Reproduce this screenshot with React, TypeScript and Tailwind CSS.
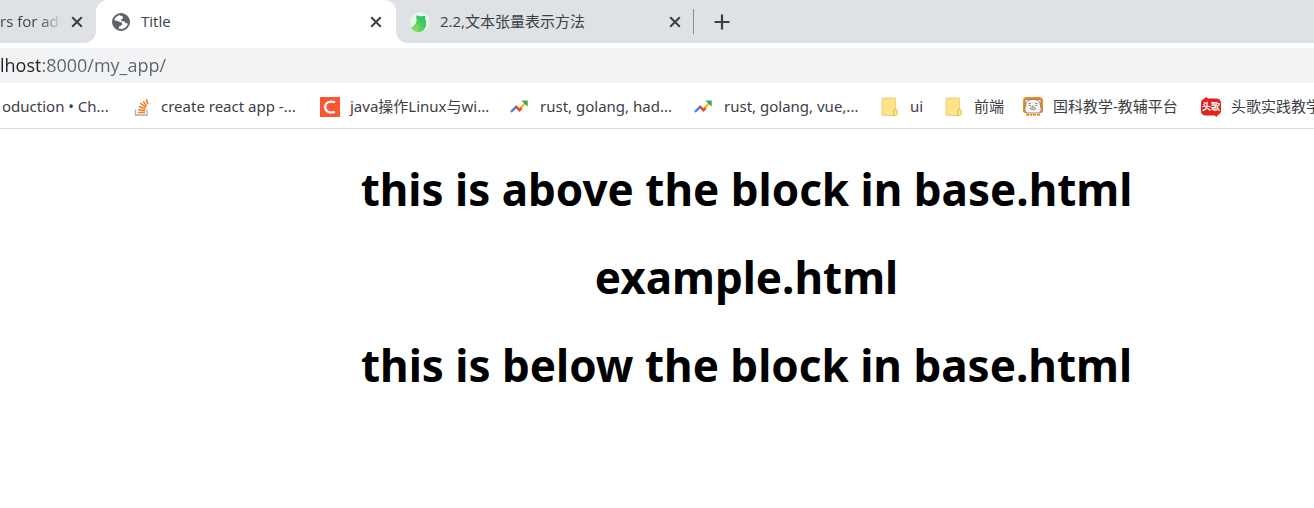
import type { ReactNode } from "react";

function CloseIcon() {
  return (
    <svg viewBox="0 0 12 12" className="size-3" fill="none" stroke="#3c4043" strokeWidth="2" aria-hidden="true">
      <path d="M1.2 1.2 10.8 10.8M10.8 1.2 1.2 10.8" />
    </svg>
  );
}

function GlobeIcon() {
  return (
    <svg viewBox="0 0 18 18" className="size-[18px]" aria-hidden="true">
      <circle cx="9" cy="9" r="8" fill="#fff" stroke="#5f6368" strokeWidth="2" />
      <path d="M8.500 1.500h3.500c2.500 1 4.500 4 4.500 7.500l-.5 1.500-2.500-.5-1-1.500-3-.5-.5-1.500 2-1-.5-2.500-2.500-.5Z" fill="#5f6368" />
      <path d="M1.500 7.200 4 7.500l2.500 1 3 .8.8 1.900-1.500 1.500-1.500.5-.8 2.800-3.500-2.200L1.500 10Z" fill="#5f6368" />
    </svg>
  );
}

function BirdIcon() {
  return (
    <svg viewBox="0 0 20 20" className="size-5" aria-hidden="true">
      <defs>
        <linearGradient id="bird" x1="0" y1="1" x2="1" y2="0">
          <stop offset="0" stopColor="#8ad957" />
          <stop offset=".5" stopColor="#4fce62" />
          <stop offset="1" stopColor="#25b866" />
        </linearGradient>
      </defs>
      <circle cx="10" cy="10" r="10" fill="#e3f6ee" />
      <path
        d="M6.300 3.700C8 3 9 4.300 11 4.300c1.600-.1 2.600-.8 4.300-.1-.2 1.300-.4 2.300.1 3.400.5 1 .8 2.200.8 3.800 0 4.600-3 8.300-7 8.500-3.200 0-6.200-1.500-7.700-4.500C4 13.800 6 12 6.600 9 7 7 5.700 5.500 6.300 3.700Z"
        fill="url(#bird)"
      />
      <path d="M1.500 15.500C3.500 14.500 5 13 6.500 11.500c3 1.500 3.500 5 1.300 8.200-2.600-.5-5-2-6.300-4.200Z" fill="#8bdc5c" opacity=".6" />
    </svg>
  );
}

function StackIcon() {
  return (
    <svg viewBox="0 0 20 20" className="size-5" fill="none" aria-hidden="true">
      <path d="M4.600 12.500v5.500h11.500v-5.500" stroke="#a9adb2" strokeWidth="1.300" />
      <path
        d="M7 15.500h7M7.100 12.600l7 1.200M8 9.400l6.500 2.600M9.500 6.100l5.400 4.300M12.300 4.300l3.200 4.800M15.600 2.300l1.100 4.900"
        stroke="#f48024"
        strokeWidth="1.600"
      />
    </svg>
  );
}

function CsdnIcon() {
  return (
    <svg viewBox="0 0 20 20" className="size-5" fill="none" aria-hidden="true">
      <path d="M0 0h20v20H0Z" fill="#fc5531" />
      <path d="M15 5.300C11 3.600 5.300 4.800 5.100 10c0 5.200 5.500 6.400 9.800 4.700" stroke="#fff" strokeWidth="2.200" />
    </svg>
  );
}

function TrendsIcon() {
  return (
    <svg viewBox="0 0 20 20" className="size-5" fill="none" strokeWidth="2.400" aria-hidden="true">
      <path d="m9.500 12.500 6-7" stroke="#fbbc04" />
      <path d="M1 14.900 6.300 9.600" stroke="#4285f4" />
      <path d="m5.500 9.200 4 4 2-2.200" stroke="#ea4335" />
      <path d="M11.500 3.500h6.200v6.200Z" fill="#34a853" />
    </svg>
  );
}

function FolderIcon() {
  return (
    <svg viewBox="0 0 20 20" className="size-5" aria-hidden="true">
      <path d="M2 1h13.500v17.500H2Z" fill="#ffe28c" stroke="#f0cb62" strokeWidth=".8" />
      <path d="M14.500 12.500h1.500c.8 0 1.200.5 1.200 1.200V17c0 1-.7 1.600-1.700 1.600h-2v-3.800Z" fill="#ffe28c" stroke="#e5b944" strokeWidth=".9" />
    </svg>
  );
}

function BearIcon() {
  return (
    <svg viewBox="0 0 20 20" className="size-5" aria-hidden="true">
      <path d="M4 0h12q4 0 4 4v9.500q0 2.500-2 2.500H2q-2 0-2-2.500V4q0-4 4-4Z" fill="#f28a1c" />
      <circle cx="4" cy="4.500" r="2.200" fill="#fff" stroke="#555" strokeWidth=".6" />
      <circle cx="16" cy="4.500" r="2.200" fill="#fff" stroke="#555" strokeWidth=".6" />
      <path d="M3.500 5C5 1.500 15 1.500 16.500 5c1 2 .6 4 1.500 6 .8 2-.5 4.600-2 5H4c-1.500-.4-2.800-3-2-5 .9-2 .5-4 1.500-6Z" fill="#f7f7f7" stroke="#666" strokeWidth=".7" />
      <path d="M5.300 6.800 8 6m4 0 2.700.8M5.800 8.500h2M12.200 8.500h2M7 11.500q1.500-2 3-.5 1.500-1.500 3 .5-3 3-6 0ZM9 9.200h2" fill="none" stroke="#555" strokeWidth=".7" />
      <path d="M3 17.800h3M6.800 17.800h2.500M10 17.800h3M14 17.800h3" stroke="#f28a1c" strokeWidth="2" />
    </svg>
  );
}

function TougeIcon() {
  return (
    <span className="relative grid size-5 place-items-center">
      <svg viewBox="0 0 20 20" className="absolute inset-0 size-5" aria-hidden="true">
        <path d="M5 0 7 1.500h8q5 0 5 5v7q0 3.500-3 4.300L15.500 20l-2-1.500H5q-5 0-5-5v-7q0-3.500 3-4.700Z" fill="#e3211f" />
      </svg>
      <span className="relative text-[9px] leading-none font-bold whitespace-nowrap text-white">头歌</span>
    </span>
  );
}

type Bookmark = { label: string; icon: ReactNode; width: string; folder?: boolean };

const bookmarks: Bookmark[] = [
  { label: "create react app -...", icon: <StackIcon />, width: "w-[189px]" },
  { label: "java操作Linux与wi...", icon: <CsdnIcon />, width: "w-[190px]" },
  { label: "rust, golang, had...", icon: <TrendsIcon />, width: "w-[184px]" },
  { label: "rust, golang, vue,...", icon: <TrendsIcon />, width: "w-[186px]" },
  { label: "ui", icon: <FolderIcon />, width: "w-[64px]", folder: true },
  { label: "前端", icon: <FolderIcon />, width: "w-[79px]", folder: true },
  { label: "国科教学-教辅平台", icon: <BearIcon />, width: "w-[178px]" },
  { label: "头歌实践教学", icon: <TougeIcon />, width: "w-[178px]" },
];

function BookmarkItem({ label, icon, width, folder }: Bookmark) {
  const cls = `flex shrink-0 items-center gap-2.5 whitespace-nowrap ${width}`;
  const content = (
    <>
      <span className="shrink-0">{icon}</span>
      <span>{label}</span>
    </>
  );
  return folder ? (
    <button type="button" className={cls}>{content}</button>
  ) : (
    <a href="#" className={cls}>{content}</a>
  );
}

export default function App() {
  return (
    <div className="overflow-hidden bg-white font-['Open_Sans','Noto_Sans_CJK_SC',sans-serif] text-[15px] text-[#3c4043]">
      <header>
        <div className="flex h-[43px] bg-white">
          <div className="flex w-24 shrink-0 items-center justify-between rounded-br-xl bg-[#dee1e6] pr-[13px]">
            <button
              type="button"
              className="w-[62px] overflow-hidden bg-linear-to-r from-[#3c4043] from-65% to-transparent bg-clip-text text-left whitespace-nowrap text-transparent"
            >
              rs for adv
            </button>
            <button type="button" aria-label="Close tab"><CloseIcon /></button>
          </div>
          <div className="w-[300px] shrink-0 bg-[#dee1e6]">
            <div className="flex h-full items-center rounded-t-xl bg-white pr-[14px] pl-4">
              <button type="button" className="flex grow items-center gap-[11px]">
                <GlobeIcon />
                <span>Title</span>
              </button>
              <button type="button" aria-label="Close tab"><CloseIcon /></button>
            </div>
          </div>
          <div className="flex min-w-0 grow items-center rounded-bl-xl bg-[#dee1e6] pl-[14px]">
            <div className="flex w-[271px] shrink-0 items-center">
              <button type="button" className="flex grow items-center gap-2.5">
                <BirdIcon />
                <span>2.2,文本张量表示方法</span>
              </button>
              <button type="button" aria-label="Close tab"><CloseIcon /></button>
            </div>
            <div className="ml-3 h-[25px] w-px shrink-0 bg-[#8b8e93]" />
            <button type="button" aria-label="New tab" className="ml-5">
              <svg viewBox="0 0 16 16" className="size-4" stroke="#3c4043" strokeWidth="2.2" aria-hidden="true">
                <path d="M8 .5v15M.5 8h15" />
              </svg>
            </button>
          </div>
        </div>
        <div className="mt-[5px] flex h-[35px] items-center bg-[#f1f3f4] pb-0.5">
          <input
            type="text"
            aria-label="Address"
            defaultValue="lhost:8000/my_app/"
            className="w-full bg-linear-to-r from-[#202124] from-[40px] to-[#5f6368] to-[40px] bg-clip-text text-lg text-transparent outline-none"
          />
        </div>
        <nav
          aria-label="Bookmarks"
          className="flex h-[46px] items-center overflow-hidden border-b border-[#dadce0] pt-0.5 font-['Noto_Sans','Noto_Sans_CJK_SC',sans-serif]"
        >
          <a href="#" className="w-[131px] shrink-0 pl-0.5 whitespace-nowrap">oduction • Ch...</a>
          {bookmarks.map((b, i) => (
            <BookmarkItem key={i} {...b} />
          ))}
        </nav>
      </header>
      <main className="flex flex-col gap-7 pt-[30px] pb-10 pl-[179px] text-center font-['Noto_Sans',sans-serif] text-[44px] leading-[60px] font-bold text-black">
        <h1>this is above the block in base.html</h1>
        <h1>example.html</h1>
        <h1>this is below the block in base.html</h1>
      </main>
    </div>
  );
}
